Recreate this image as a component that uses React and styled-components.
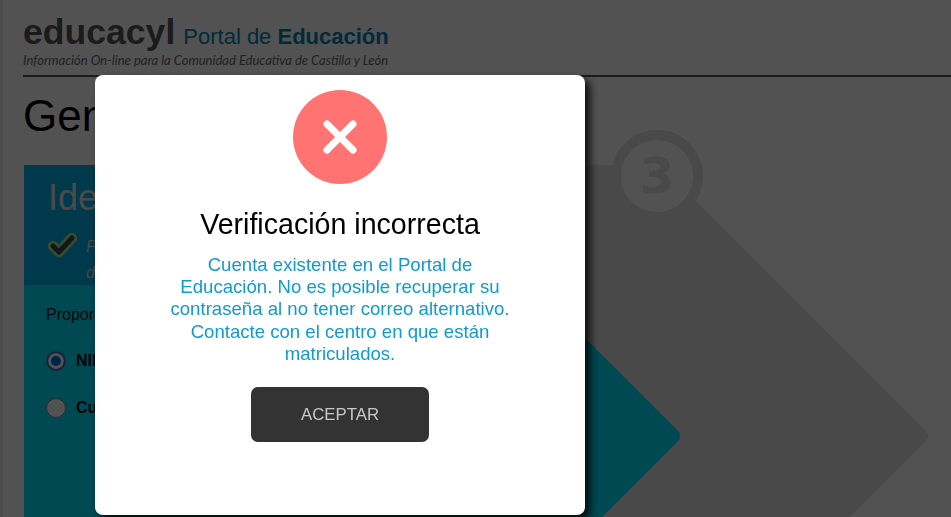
import React from 'react';
import styled, { createGlobalStyle } from 'styled-components';

const GlobalStyle = createGlobalStyle`
  html, body {
    margin: 0;
    padding: 0;
    height: 100%;
    overflow: hidden;
    background: #fff;
    font-family: 'Liberation Sans', Arial, sans-serif;
  }
`;

const Page = styled.div`
  height: 517px;
  width: 951px;
  box-sizing: border-box;
  border-left: 3px solid #e6f0f8;
  padding: 13px 0 0 20px;
  overflow: hidden;
`;

const Masthead = styled.header`
  height: 62px;
  border-bottom: 2px solid #555;
`;

const BrandRow = styled.div`
  display: flex;
  align-items: baseline;
  height: 40px;
`;

const Brand = styled.span`
  font-size: 35.6px;
  line-height: 38px;
  font-weight: 700;
  color: #555;
`;

const Portal = styled.span`
  margin-left: 8px;
  font-size: 22px;
  color: #0083b8;
  b {
    font-weight: 700;
  }
`;

const Tagline = styled.div`
  font-family: Lato, 'Open Sans', sans-serif;
  font-style: italic;
  font-size: 13px;
  line-height: 14px;
  color: #666;
`;

const PageTitle = styled.h1`
  margin: 14px 0 0 0;
  font-size: 44px;
  line-height: 50px;
  font-weight: 400;
  color: #000;
`;

const Steps = styled.div`
  position: relative;
  margin: 24px 0 0 1px;
  height: 540px;
`;

const ArrowCard = styled.div`
  position: absolute;
  top: 0;
  left: 0;
  width: ${(p) => p.$width}px;
  height: 540px;
  background: ${(p) => p.$color};
  z-index: ${(p) => p.$layer};

  &::after {
    content: '';
    position: absolute;
    top: 80px;
    right: -191px;
    width: 382px;
    height: 382px;
    transform: rotate(45deg);
    border-radius: 7px;
    background: ${(p) => p.$color};
  }
`;

const StepBadge = styled.div`
  position: absolute;
  top: -35px;
  left: 587px;
  width: 72px;
  height: 72px;
  border: 10px solid #e2e2e2;
  border-radius: 50%;
  background: #fff;
  display: flex;
  align-items: center;
  justify-content: center;
  font-family: 'DejaVu Sans', sans-serif;
  font-weight: 700;
  font-size: 50px;
  color: #e2e2e2;
  z-index: 1;
`;

const CardContent = styled.div`
  position: relative;
  z-index: 3;
  width: 389px;
`;

const CardHeader = styled.div`
  background: #00b2ea;
  height: 120px;
  box-sizing: border-box;
  padding: 13px 0 0 24px;
`;

const CardTitle = styled.div`
  font-size: 36px;
  line-height: 40px;
  color: #e6e6e6;
  white-space: nowrap;
`;

const Notice = styled.div`
  display: flex;
  gap: 8px;
  margin-top: 15px;
  margin-left: -2px;
`;

const NoticeText = styled.div`
  font-style: italic;
  font-size: 16px;
  line-height: 26px;
  padding-top: 1px;
  color: #d8d8d8;
  white-space: nowrap;
`;

const CardBody = styled.div`
  padding: 20px 0 0 22px;
`;

const Lead = styled.div`
  font-size: 16px;
  line-height: 20px;
  color: #222;
  white-space: nowrap;
`;

const Options = styled.div`
  display: flex;
  flex-direction: column;
  gap: 27px;
  margin-top: 26px;
`;

const Option = styled.div`
  display: flex;
  align-items: center;
  gap: 10px;
  font-size: 16px;
  font-weight: 700;
  color: #111;
`;

const Radio = styled.span`
  box-sizing: border-box;
  width: 20px;
  height: 20px;
  border-radius: 50%;
  border: ${(p) => (p.$checked ? '2px solid #4a6fb5' : '1px solid #888')};
  background: ${(p) => (p.$checked ? '#0070d8' : '#fff')};
  box-shadow: ${(p) => (p.$checked ? 'inset 0 0 0 3px #fff' : 'none')};
`;

const Overlay = styled.div`
  position: fixed;
  inset: 0;
  z-index: 10;
  background: rgba(0, 0, 0, 0.68);
  padding: 75px 0 0 95px;
`;

const Modal = styled.div`
  width: 490px;
  height: 440px;
  box-sizing: border-box;
  padding-top: 15px;
  background: #fff;
  border-radius: 8px;
  box-shadow: 5px 5px 9px rgba(0, 0, 0, 0.85);
  display: flex;
  flex-direction: column;
  align-items: center;
`;

const ModalTitle = styled.h2`
  margin: 24px 0 0;
  font-size: 28.6px;
  line-height: 32px;
  font-weight: 400;
  color: #000;
`;

const ModalText = styled.p`
  margin: 14px 0 0;
  width: 345px;
  font-size: 18.6px;
  line-height: 22.2px;
  text-align: center;
  color: #0f9bcf;
`;

const AcceptButton = styled.button`
  margin-top: 22px;
  width: 178px;
  height: 55px;
  border: 0;
  border-radius: 7px;
  background: #333;
  color: #c8c8c8;
  font-family: inherit;
  font-size: 16.8px;
`;

const CheckIcon = () => (
  <svg width="32" height="26" viewBox="0 0 32 26" fill="none" strokeLinecap="round" strokeLinejoin="round">
    <path d="M7 13l6 6L26 5" stroke="#9cf09c" strokeWidth="10.5" />
    <path d="M7 13l6 6L26 5" stroke="#444" strokeWidth="5" />
  </svg>
);

const ErrorIcon = () => (
  <svg width="94" height="94" viewBox="0 0 94 94">
    <circle cx="47" cy="47" r="47" fill="#ff7373" />
    <path d="M34 34l26 26M60 34L34 60" stroke="#fff" strokeWidth="7" strokeLinecap="round" />
  </svg>
);

export default function App() {
  return (
    <>
      <GlobalStyle />
      <Page>
        <Masthead>
          <BrandRow>
            <Brand>educacyl</Brand>
            <Portal>
              Portal de <b>Educación</b>
            </Portal>
          </BrandRow>
          <Tagline>Información On-line para la Comunidad Educativa de Castilla y León</Tagline>
        </Masthead>
        <PageTitle>Generar</PageTitle>
        <Steps>
          <StepBadge>3</StepBadge>
          <ArrowCard $width={637} $color="#e2e2e2" $layer={0} />
          <ArrowCard $width={389} $color="#00e0ff" $layer={2} />
          <CardContent>
            <CardHeader>
              <CardTitle>Identificación</CardTitle>
              <Notice>
                <CheckIcon />
                <NoticeText>
                  Paso hecho
                  <br />
                  de datos
                </NoticeText>
              </Notice>
            </CardHeader>
            <CardBody>
              <Lead>Proporcione:</Lead>
              <Options>
                <Option>
                  <Radio $checked />
                  NIF / NIE
                </Option>
                <Option>
                  <Radio />
                  Cuenta
                </Option>
              </Options>
            </CardBody>
          </CardContent>
        </Steps>
      </Page>
      <Overlay>
        <Modal>
          <ErrorIcon />
          <ModalTitle>Verificación incorrecta</ModalTitle>
          <ModalText>
            Cuenta existente en el Portal de Educación. No es posible recuperar su contraseña al no tener correo
            alternativo. Contacte con el centro en que están matriculados.
          </ModalText>
          <AcceptButton>ACEPTAR</AcceptButton>
        </Modal>
      </Overlay>
    </>
  );
}
